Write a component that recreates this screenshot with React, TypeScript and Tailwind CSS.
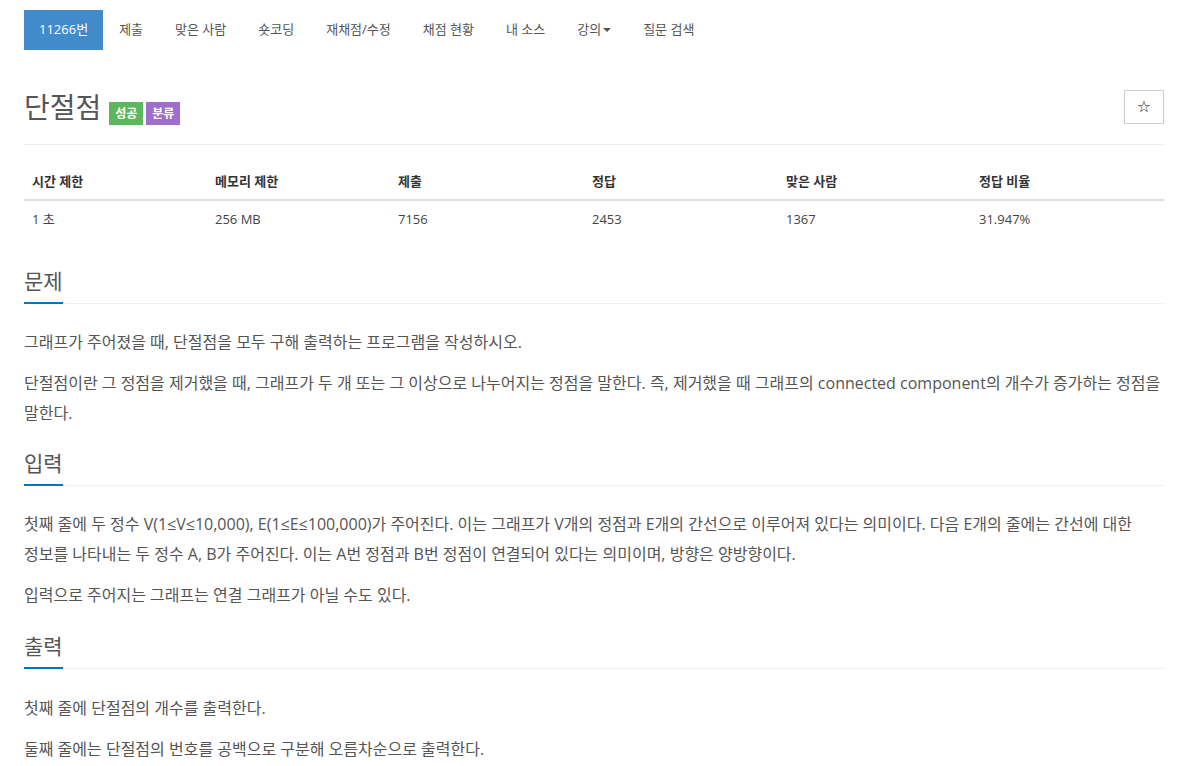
const FONT = "font-['Open_Sans','Noto_Sans_CJK_KR',sans-serif]";

const navItems = ["제출", "맞은 사람", "숏코딩", "재채점/수정", "채점 현황", "내 소스"];

const stats = [
  { label: "시간 제한", value: "1 초", w: "w-[183px]" },
  { label: "메모리 제한", value: "256 MB", w: "w-[183px]" },
  { label: "제출", value: "7156", w: "w-[194px]" },
  { label: "정답", value: "2453", w: "w-[194px]" },
  { label: "맞은 사람", value: "1367", w: "w-[193px]" },
  { label: "정답 비율", value: "31.947%", w: "w-[193px]" },
];

function Headline({ title, className = "" }: { title: string; className?: string }) {
  return (
    <h2 className={`border-b border-dotted border-[#dfe4ea] text-[21px] leading-[28px] text-[#555] ${className}`}>
      <span className="-mb-px inline-block border-b-2 border-[#0076c0] pb-[7px]">{title}</span>
    </h2>
  );
}

function P({ children }: { children: React.ReactNode }) {
  return <p className="mb-[11px] break-keep text-[16px] leading-[30px] text-[#555]">{children}</p>;
}

export default function App() {
  return (
    <div className={`${FONT} min-h-screen bg-white text-[13px] text-[#333]`}>
      <div className="ml-6 w-[1140px]">
        <nav className="mt-[10px] flex h-10 items-stretch text-[13px] text-[#555]">
          <div className="flex items-center bg-[#428bca] px-[15px] text-white">11266번</div>
          {navItems.map((item) => (
            <div key={item} className="flex items-center px-[16px]">
              {item}
            </div>
          ))}
          <div className="flex items-center px-[16px]">
            강의
            <span className="ml-[2px] inline-block h-0 w-0 border-x-[4px] border-t-[4px] border-x-transparent border-t-[#555]" />
          </div>
          <div className="flex items-center px-[16px]">질문 검색</div>
        </nav>

        <div className="mt-10 flex items-center justify-between border-b border-[#eee] pb-5">
          <div className="flex items-end gap-[8px]">
            <h1 className="text-[28px] leading-[34px] text-[#555]">단절점</h1>
            <div className="-mb-px flex gap-[3px] text-[12px] font-bold text-white">
              <span className="flex h-[23px] w-[34px] items-center justify-center bg-[#5cb85c]">성공</span>
              <span className="flex h-[23px] w-[34px] items-center justify-center bg-[#9f6dcb]">분류</span>
            </div>
          </div>
          <button className="flex h-[34px] w-10 items-center justify-center border border-[#ccc] bg-white font-['DejaVu_Sans',sans-serif] text-[16px] text-[#222]">
            ☆
          </button>
        </div>

        <table className="mt-[18px] w-full table-fixed border-collapse">
          <thead>
            <tr className="border-b-2 border-[#ddd]">
              {stats.map((s) => (
                <th key={s.label} className={`${s.w} px-2 py-2 text-left text-[13px] font-bold leading-5 text-[#333]`}>
                  {s.label}
                </th>
              ))}
            </tr>
          </thead>
          <tbody>
            <tr>
              {stats.map((s) => (
                <td key={s.label} className="px-2 py-2 text-[13px] leading-5 text-[#444]">
                  {s.value}
                </td>
              ))}
            </tr>
          </tbody>
        </table>

        <section>
          <Headline title="문제" className="mt-[30px]" />
          <div className="mt-[23px]">
            <P>그래프가 주어졌을 때, 단절점을 모두 구해 출력하는 프로그램을 작성하시오.</P>
            <P>
              단절점이란 그 정점을 제거했을 때, 그래프가 두 개 또는 그 이상으로 나누어지는 정점을 말한다. 즉, 제거했을 때
              그래프의 connected component의 개수가 증가하는 정점을 말한다.
            </P>
          </div>
        </section>

        <section>
          <Headline title="입력" className="mt-[21px]" />
          <div className="mt-[23px]">
            <P>
              첫째 줄에 두 정수 V(1≤V≤10,000), E(1≤E≤100,000)가 주어진다. 이는 그래프가 V개의 정점과 E개의 간선으로
              이루어져 있다는 의미이다. 다음 E개의 줄에는 간선에 대한 정보를 나타내는 두 정수 A, B가 주어진다. 이는 A번
              정점과 B번 정점이 연결되어 있다는 의미이며, 방향은 양방향이다.
            </P>
            <P>입력으로 주어지는 그래프는 연결 그래프가 아닐 수도 있다.</P>
          </div>
        </section>

        <section>
          <Headline title="출력" className="mt-[22px]" />
          <div className="mt-[24px]">
            <P>첫째 줄에 단절점의 개수를 출력한다.</P>
            <P>둘째 줄에는 단절점의 번호를 공백으로 구분해 오름차순으로 출력한다.</P>
          </div>
        </section>
      </div>
    </div>
  );
}
